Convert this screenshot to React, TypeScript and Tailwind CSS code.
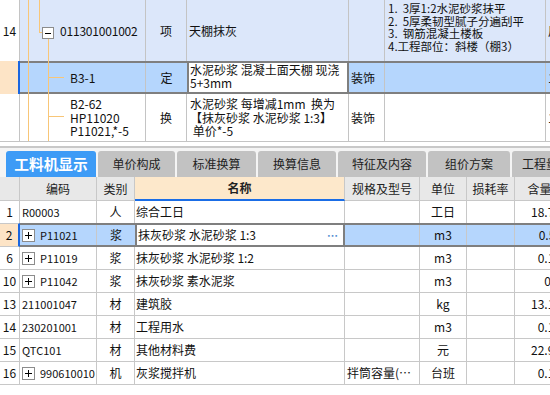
import React from "react";

const LINE = "bg-[#f8c678]";

function MinusBox() {
  return (
    <div className="absolute left-[22px] top-[27px] w-[12px] h-[12px] border border-[#8c8c8c] bg-white flex items-center justify-center">
      <div className="w-[6px] h-px bg-black" />
    </div>
  );
}

function PlusBox() {
  return (
    <div className="relative w-[13px] h-[13px] border border-[#8c8c8c] bg-white mr-[5px] shrink-0 flex items-center justify-center">
      <div className="absolute w-[7px] h-px bg-black" />
      <div className="absolute w-px h-[7px] bg-black" />
    </div>
  );
}

function TopTable() {
  return (
    <div className="flex flex-col">
      {/* row 14 */}
      <div className="flex h-[61px]">
        <div className="w-[20px] border-r border-[#c4c4c4] bg-white flex items-center justify-center">14</div>
        <div className="flex flex-1 bg-[#dce7fa]">
          <div className="relative w-[126px] border-r border-[#c4c4c4] flex items-center pl-[40px]">
            <div className={`absolute left-[8px] top-0 bottom-0 w-px ${LINE}`} />
            <div className={`absolute left-[19px] top-0 h-[33px] w-px ${LINE}`} />
            <div className={`absolute left-[19px] top-[32px] w-[3px] h-px ${LINE}`} />
            <div className={`absolute left-[28px] top-[39px] bottom-0 w-px ${LINE}`} />
            <MinusBox />
            <span className="tracking-[-0.2px]">011301001002</span>
          </div>
          <div className="w-[41px] border-r border-[#c4c4c4] flex items-center justify-center">项</div>
          <div className="w-[162px] border-r border-[#c4c4c4] flex items-center pl-[2px]">天棚抹灰</div>
          <div className="w-[36px] border-r border-[#c4c4c4]" />
          <div className="w-[161px] border-r border-[#c4c4c4] pl-[3px] pt-[2px] text-[11.5px] leading-[12.5px] whitespace-pre">
            <div>1.  3厚1:2水泥砂浆抹平</div>
            <div>2.  5厚柔韧型腻子分遍刮平</div>
            <div>3.  钢筋混凝土楼板</div>
            <div>4.工程部位：斜楼（棚3）</div>
          </div>
          <div className="flex-1 flex items-center pl-[2px] overflow-hidden">厂</div>
        </div>
      </div>
      {/* row B3-1 selected */}
      <div className="flex h-[33px]">
        <div className="w-[20px] bg-[#fde4c6] border-r-2 border-[#1a66e0]" />
        <div className="flex flex-1 bg-[#b5d6fd] border-y-2 border-[#7f7f7f]">
          <div className="relative w-[126px] border-r border-[#c4c4c4] flex items-center pl-[50px]">
            <div className={`absolute left-[8px] top-[-2px] bottom-[-2px] w-px ${LINE}`} />
            <div className={`absolute left-[28px] top-[-2px] bottom-[-2px] w-px ${LINE}`} />
            <div className={`absolute left-[28px] top-[14px] w-[16px] h-px ${LINE}`} />
            <span>B3-1</span>
          </div>
          <div className="w-[41px] flex items-center justify-center">定</div>
          <div className="w-[162px] bg-white border-x-2 border-[#7f7f7f] pl-[1px] leading-[13px] overflow-hidden whitespace-nowrap">
            <div>水泥砂浆 混凝土面天棚 现浇</div>
            <div>5+3mm</div>
          </div>
          <div className="w-[36px] border-r border-[#c4c4c4] flex items-center pl-[2px]">装饰</div>
          <div className="w-[161px] border-r border-[#c4c4c4]" />
          <div className="flex-1 flex items-center pl-[2px] overflow-hidden">1</div>
        </div>
      </div>
      {/* row B2-62 */}
      <div className="flex h-[48px] border-b border-[#c4c4c4]">
        <div className="w-[20px] border-r border-[#c4c4c4] bg-white" />
        <div className="relative w-[126px] border-r border-[#c4c4c4] pl-[50px] pt-[3px] leading-[13.5px]">
          <div className={`absolute left-[8px] top-0 bottom-0 w-px ${LINE}`} />
          <div className={`absolute left-[28px] top-0 bottom-0 w-px ${LINE}`} />
          <div className={`absolute left-[28px] top-[22px] w-[16px] h-px ${LINE}`} />
          <div>B2-62</div>
          <div>HP11020</div>
          <div>P11021,*-5</div>
        </div>
        <div className="w-[41px] border-r border-[#c4c4c4] flex items-center justify-center">换</div>
        <div className="w-[162px] border-r border-[#c4c4c4] pl-[3px] pt-[3px] leading-[13.5px] whitespace-pre overflow-hidden">
          <div>水泥砂浆 每增减1mm  换为</div>
          <div>【抹灰砂浆 水泥砂浆 1:3】</div>
          <div> 单价*-5</div>
        </div>
        <div className="w-[36px] border-r border-[#c4c4c4] flex items-center pl-[2px]">装饰</div>
        <div className="w-[161px] border-r border-[#c4c4c4]" />
        <div className="flex-1 flex items-center pl-[2px] overflow-hidden">1</div>
      </div>
    </div>
  );
}

const tabs = [
  { label: "单价构成", w: "w-[77px]" },
  { label: "标准换算", w: "w-[79px]" },
  { label: "换算信息", w: "w-[78px]" },
  { label: "特征及内容", w: "w-[88px]" },
  { label: "组价方案", w: "w-[82px]" },
  { label: "工程量明细", w: "w-[80px]" },
];

function Tabs() {
  return (
    <div className="h-[35px] bg-white">
      <div className="h-[4px] bg-white" />
      <div className="h-[2px] bg-[#c8c8c8]" />
      <div className="h-[29px] bg-[#f4f4f4] pt-[3px] pl-[6px] flex gap-[2px] items-end">
        <div className="w-[90px] h-[26px] shrink-0 rounded-t-[3px] bg-[#3d9bf6] text-white font-bold text-[14.7px] flex items-center justify-center">
          工料机显示
        </div>
        {tabs.map((t) => (
          <div
            key={t.label}
            className={`${t.w} h-[26px] shrink-0 rounded-t-[3px] bg-[#c2c2c2] text-[#222] flex items-center justify-center whitespace-nowrap`}
          >
            {t.label}
          </div>
        ))}
      </div>
    </div>
  );
}

type Item = {
  n: string;
  code: string;
  plus?: boolean;
  type: string;
  name: string;
  spec?: string;
  unit: string;
  qty: string;
  sel?: boolean;
};

const items: Item[] = [
  { n: "1", code: "R00003", type: "人", name: "综合工日", unit: "工日", qty: "18.75" },
  { n: "2", code: "P11021", plus: true, type: "浆", name: "抹灰砂浆 水泥砂浆 1:3", unit: "m3", qty: "0.51", sel: true },
  { n: "6", code: "P11019", plus: true, type: "浆", name: "抹灰砂浆 水泥砂浆 1:2", unit: "m3", qty: "0.11" },
  { n: "10", code: "P11042", plus: true, type: "浆", name: "抹灰砂浆 素水泥浆", unit: "m3", qty: "0.1" },
  { n: "13", code: "211001047", type: "材", name: "建筑胶", unit: "kg", qty: "13.12" },
  { n: "14", code: "230201001", type: "材", name: "工程用水", unit: "m3", qty: "0.11" },
  { n: "15", code: "QTC101", type: "材", name: "其他材料费", unit: "元", qty: "22.95" },
  { n: "16", code: "990610010", plus: true, type: "机", name: "灰浆搅拌机", spec: "拌筒容量(…", unit: "台班", qty: "0.11" },
];

const cell = "border-r border-b border-[#c8c8c8] flex items-center";

function Grid() {
  return (
    <div className="flex flex-col">
      <div className="flex h-[24px] bg-[#e8e8e8] text-[#222]">
        <div className={`w-[20px] ${cell}`} />
        <div className={`w-[77px] ${cell} justify-center`}>编码</div>
        <div className={`w-[38px] ${cell} justify-center`}>类别</div>
        <div className="w-[210px] border-r border-[#c8c8c8] border-b-2 border-b-[#1a6de6] bg-[#fde8cb] flex items-center justify-center font-bold">
          名称
        </div>
        <div className={`w-[75px] ${cell} justify-center`}>规格及型号</div>
        <div className={`w-[47px] ${cell} justify-center`}>单位</div>
        <div className={`w-[48px] ${cell} justify-center`}>损耗率</div>
        <div className={`w-[50px] shrink-0 ${cell} justify-center`}>含量</div>
      </div>
      {items.map((it) =>
        it.sel ? (
          <div key={it.n} className="flex h-[24px] -mt-px">
            <div className="w-[20px] bg-[#fde4c6] border-r-2 border-[#1a66e0] border-y border-y-[#c8c8c8] flex items-center justify-center">
              {it.n}
            </div>
            <div className="flex bg-[#b5d6fd] border-y-2 border-[#7f7f7f]">
              <div className="w-[77px] border-r border-[#c8c8c8] flex items-center pl-[2px] text-[11px]">
                {it.plus && <PlusBox />}
                {it.code}
              </div>
              <div className="w-[38px] flex items-center justify-center">{it.type}</div>
              <div className="w-[210px] bg-white border-x-2 border-[#7f7f7f] flex items-center justify-between pl-[1px] pr-[5px] whitespace-pre">
                <span>{it.name}</span>
                <span className="text-[#4f8cd0] text-[11px] font-bold">…</span>
              </div>
              <div className="w-[75px] border-r border-[#c8c8c8]" />
              <div className="w-[47px] border-r border-[#c8c8c8] flex items-center justify-center">{it.unit}</div>
              <div className="w-[48px] border-r border-[#c8c8c8]" />
              <div className="w-[50px] shrink-0 flex items-center justify-end pr-[3px]">{it.qty}</div>
            </div>
          </div>
        ) : (
          <div key={it.n} className="flex h-[23px]">
            <div className={`w-[20px] ${cell} justify-center`}>{it.n}</div>
            <div className={`w-[77px] ${cell} pl-[2px] text-[11px] overflow-hidden whitespace-nowrap`}>
              {it.plus && <PlusBox />}
              {it.code}
            </div>
            <div className={`w-[38px] ${cell} justify-center`}>{it.type}</div>
            <div className={`w-[210px] ${cell} pl-[1px] whitespace-pre`}>{it.name}</div>
            <div className={`w-[75px] ${cell} pl-[2px] whitespace-nowrap overflow-hidden`}>{it.spec ?? ""}</div>
            <div className={`w-[47px] ${cell} justify-center`}>{it.unit}</div>
            <div className={`w-[48px] ${cell}`} />
            <div className={`w-[50px] shrink-0 ${cell} justify-end pr-[3px]`}>{it.qty}</div>
          </div>
        )
      )}
    </div>
  );
}

export default function App() {
  return (
    <div className="w-[550px] h-[395px] overflow-hidden bg-white text-[12px] text-[#111] font-['Noto_Sans_CJK_SC',sans-serif]">
      <div className="w-[600px]">
        <TopTable />
        <Tabs />
        <Grid />
      </div>
    </div>
  );
}
